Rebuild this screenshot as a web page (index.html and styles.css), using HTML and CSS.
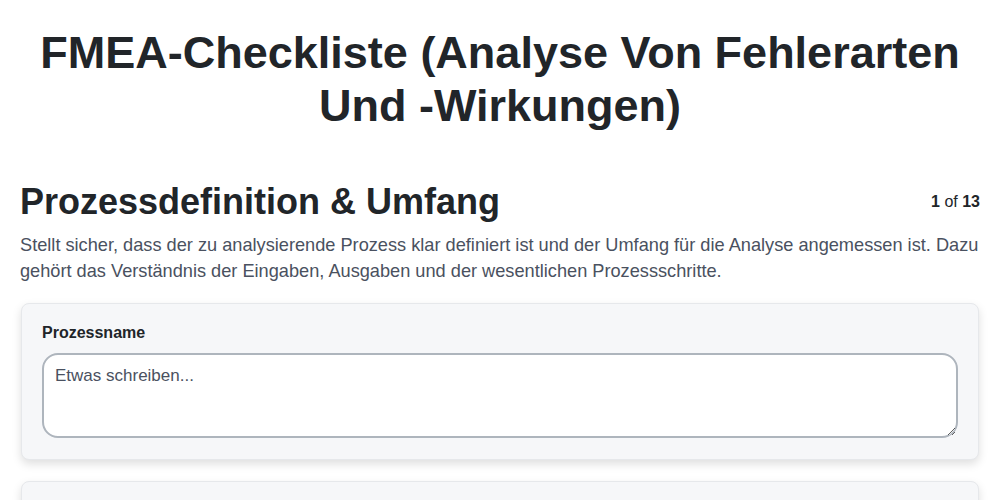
FILE: index.html
```html
<!DOCTYPE html>
<html lang="de">
<head>
    <meta charset="UTF-8">
    <meta name="viewport" content="width=device-width, initial-scale=1.0">
    <title>FMEA-Checkliste</title>
    <link rel="stylesheet" href="styles.css">
</head>
<body>
    <div class="page">
        <h1 class="title">FMEA-Checkliste (Analyse Von Fehlerarten Und -Wirkungen)</h1>

        <div class="section-head">
            <h2 class="section-title">Prozessdefinition &amp; Umfang</h2>
            <div class="step"><b>1</b> of <b>13</b></div>
        </div>
        <p class="section-desc">Stellt sicher, dass der zu analysierende Prozess klar definiert ist und der Umfang für die Analyse angemessen ist. Dazu gehört das Verständnis der Eingaben, Ausgaben und der wesentlichen Prozessschritte.</p>

        <div class="card">
            <label class="field-label" for="prozessname">Prozessname</label>
            <textarea id="prozessname" class="field-input" placeholder="Etwas schreiben..."></textarea>
        </div>

        <div class="card">
            <label class="field-label" for="umfang">Umfang</label>
            <textarea id="umfang" class="field-input" placeholder="Etwas schreiben..."></textarea>
        </div>
    </div>
</body>
</html>
```

FILE: styles.css
```css
*{
    margin: 0;
    padding: 0;
    box-sizing: border-box;
}

body{
    font-family: "Liberation Sans", Arial, sans-serif;
    color: #212529;
    background: #fff;
}

.page{
    padding: 26px 20px 20px;
}

.title{
    font-size: 45px;
    line-height: 53px;
    text-align: center;
    font-weight: bold;
    margin: 0 0 48px;
}

.section-head{
    display: flex;
    justify-content: space-between;
    align-items: center;
}

.section-title{
    font-size: 36px;
    line-height: 44px;
    font-weight: bold;
}

.step{
    font-size: 16px;
    color: #212529;
}

.section-desc{
    margin-top: 8px;
    font-size: 18.2px;
    line-height: 26px;
    color: #4a5160;
}

.card{
    margin: 19px 1px 0;
    background: #f6f7f9;
    border: 1px solid #e6e8eb;
    border-radius: 8px;
    padding: 20px 20px 21px;
    box-shadow: 0 4px 10px rgba(0,0,0,0.13);
}

.card + .card{
    margin-top: 21px;
}

.field-label{
    display: block;
    font-size: 16px;
    font-weight: bold;
    color: #212529;
    line-height: 18px;
    margin-bottom: 11px;
}

.field-input{
    display: block;
    width: 100%;
    height: 85px;
    padding: 11px 11px;
    border: 2px solid #aeb5bd;
    border-radius: 16px;
    background: #fff;
    font-family: "Liberation Sans", Arial, sans-serif;
    font-size: 17px;
    line-height: 20px;
    color: #212529;
}

.field-input::placeholder{
    color: #4a5160;
    opacity: 1;
}
```
